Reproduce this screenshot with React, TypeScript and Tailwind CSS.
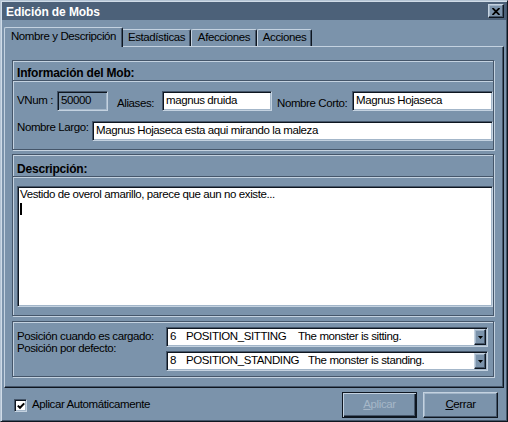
import React from "react";

const raised =
  "border border-t-[#c4d2e0] border-l-[#c4d2e0] border-r-[#0e1620] border-b-[#0e1620] shadow-[inset_-1px_-1px_0_#45566a,inset_1px_1px_0_#a3b6c9]";
const sunken =
  "border border-t-[#45566a] border-l-[#45566a] border-r-[#c4d2e0] border-b-[#c4d2e0] shadow-[inset_1px_1px_0_#0e1620,inset_-1px_-1px_0_#a3b6c9]";
const etched = "border border-[#45566a] shadow-[inset_1px_1px_0_#c4d2e0,1px_1px_0_#c4d2e0]";

function DropArrow() {
  return (
    <div className={`w-[12px] h-[16px] mr-[1px] bg-[#7b93ab] ${raised} flex items-center justify-center shrink-0`}>
      <svg width="5" height="3" viewBox="0 0 5 3">
        <polygon points="0,0 5,0 2.5,3" fill="#000" />
      </svg>
    </div>
  );
}

function Select({ num, code, codeW, desc }: { num: string; code: string; codeW: string; desc: string }) {
  return (
    <div className={`w-[322px] h-[20px] bg-white ${sunken} flex items-center`}>
      <div className="flex-1 flex items-center pl-[3px] whitespace-pre overflow-hidden">
        <span className="w-[16px] shrink-0">{num}</span>
        <span className={`${codeW} shrink-0`}>{code}</span>
        <span>{desc}</span>
      </div>
      <DropArrow />
    </div>
  );
}

export default function App() {
  return (
    <div className="w-[508px] h-[422px] bg-[#7b93ab] font-['Liberation_Sans',Arial,sans-serif] text-[11.5px] tracking-[-0.4px] text-black leading-none select-none overflow-hidden">
      <div className="w-full h-full flex flex-col border border-t-[#b4c4d4] border-l-[#b4c4d4] border-r-[#0e1620] border-b-[#0e1620] shadow-[inset_1px_1px_0_#d0dce8,inset_-1px_-1px_0_#45566a] p-px">
        {/* Title bar */}
        <div className="h-[18px] shrink-0 bg-[#4c6179] flex items-start justify-between pl-[4px] pr-[2px]">
          <span className="mt-[4px] text-white font-bold text-[12px] tracking-[-0.1px]">Edición de Mobs</span>
          <div className={`mt-[2px] w-[16px] h-[14px] bg-[#7b93ab] ${raised} flex items-center justify-center`}>
            <svg width="8" height="7" viewBox="0 0 8 7">
              <path d="M0.5 0 L7.5 7 M7.5 0 L0.5 7" stroke="#000" strokeWidth="1.8" />
            </svg>
          </div>
        </div>

        {/* Tabs */}
        <div className="mt-[7px] ml-[2px] h-[20px] -mb-px flex items-end relative z-10 shrink-0">
          <div className="w-[119px] h-[20px] bg-[#7b93ab] border-t border-l border-r border-t-[#c4d2e0] border-l-[#c4d2e0] border-r-[#0e1620] shadow-[inset_-1px_0_0_#45566a] rounded-t-[2px] flex justify-center pt-[3px]">
            Nombre y Descripción
          </div>
          <div className="w-[68px] h-[17px] mb-px bg-[#7b93ab] border-t border-r border-t-[#c4d2e0] border-r-[#0e1620] shadow-[inset_-1px_0_0_#45566a] rounded-tr-[2px] flex justify-center pt-[2px]">
            Estadísticas
          </div>
          <div className="w-[66px] h-[17px] mb-px bg-[#7b93ab] border-t border-l border-r border-t-[#c4d2e0] border-l-[#c4d2e0] border-r-[#0e1620] shadow-[inset_-1px_0_0_#45566a] rounded-t-[2px] flex justify-center pt-[2px]">
            Afecciones
          </div>
          <div className="w-[55px] h-[17px] mb-px bg-[#7b93ab] border-t border-l border-r border-t-[#c4d2e0] border-l-[#c4d2e0] border-r-[#0e1620] shadow-[inset_-1px_0_0_#45566a] rounded-t-[2px] flex justify-center pt-[2px]">
            Acciones
          </div>
        </div>

        {/* Tab panel */}
        <div className="ml-[2px] w-[500px] h-[342px] shrink-0 border border-t-[#c4d2e0] border-l-[#c4d2e0] border-r-[#0e1620] border-b-[#0e1620] shadow-[inset_-1px_-1px_0_#45566a] pt-[13px] pl-[7px] flex flex-col">
          {/* Información del Mob */}
          <div className={`w-[482px] h-[90px] shrink-0 ${etched} flex flex-col`}>
            <div className="h-[20px] border-b border-[#45566a] shadow-[0_1px_0_#c4d2e0] pl-[4px] pt-[6px] font-bold text-[12px] tracking-[-0.2px]">
              Información del Mob:
            </div>
            <div className="mt-[10px] h-[20px] pl-[4px] flex items-start">
              <span className="w-[40px] mt-[4px] shrink-0">VNum :</span>
              <div className={`w-[51px] h-[20px] bg-[#7b93ab] ${sunken} flex items-center pl-[3px]`}>50000</div>
              <span className="ml-[9px] w-[45px] mt-[7px] shrink-0">Aliases:</span>
              <div className={`w-[110px] h-[20px] bg-white ${sunken} flex items-center pl-[3px]`}>magnus druida</div>
              <span className="ml-[5px] w-[75px] mt-[7px] shrink-0">Nombre Corto:</span>
              <div className={`flex-1 h-[20px] bg-white ${sunken} flex items-center pl-[3px]`}>Magnus Hojaseca</div>
            </div>
            <div className="mt-[10px] h-[20px] pl-[4px] flex items-start">
              <span className="w-[75px] mt-[1px] shrink-0">Nombre Largo:</span>
              <div className={`flex-1 h-[20px] bg-white ${sunken} flex items-center pl-[3px]`}>
                Magnus Hojaseca esta aqui mirando la maleza
              </div>
            </div>
          </div>

          {/* Descripción */}
          <div className={`mt-[4px] w-[482px] h-[162px] shrink-0 ${etched} flex flex-col`}>
            <div className="h-[22px] border-b border-[#45566a] shadow-[0_1px_0_#c4d2e0] pl-[4px] pt-[8px] font-bold text-[12px] tracking-[-0.2px]">
              Descripción:
            </div>
            <div className="mt-[9px] pl-[4px] flex">
              <div className={`flex-1 h-[121px] bg-white ${sunken} pl-[2px] pt-[2px] flex flex-col`}>
                <span>Vestido de overol amarillo, parece que aun no existe...</span>
                <div className="w-[2px] h-[12px] bg-black mt-[2px]" />
              </div>
            </div>
          </div>

          {/* Posiciones */}
          <div className={`mt-[5px] w-[482px] h-[56px] shrink-0 ${etched} flex flex-col pt-[5px] pl-[4px]`}>
            <div className="h-[20px] flex items-start">
              <span className="w-[149px] mt-[4px] shrink-0">Posición cuando es cargado:</span>
              <Select num="6" code="POSITION_SITTING" codeW="w-[112px]" desc="The monster is sitting." />
            </div>
            <div className="mt-[4px] h-[20px] flex items-start">
              <span className="w-[149px] -mt-[8px] shrink-0">Posición por defecto:</span>
              <Select num="8" code="POSITION_STANDING" codeW="w-[122px]" desc="The monster is standing." />
            </div>
          </div>
        </div>

        {/* Bottom bar */}
        <div className="flex-1 flex items-start">
          <div className="mt-[11px] ml-[12px] flex items-start">
            <div className={`w-[13px] h-[13px] bg-white ${sunken} flex items-center justify-center`}>
              <svg width="8" height="8" viewBox="0 0 8 8">
                <path d="M0.8 3.6 L3 5.8 L7.2 1.4" stroke="#000" strokeWidth="2" fill="none" />
              </svg>
            </div>
            <span className="ml-[5px]">Aplicar Automáticamente</span>
          </div>
          <div className="ml-auto mt-[4px] mr-[8px] flex gap-[6px]">
            <div className="w-[75px] h-[26px] bg-[#7b93ab] border border-[#0e1620] shadow-[inset_1px_1px_0_#c4d2e0,inset_-1px_-1px_0_#0e1620,inset_-2px_-2px_0_#45566a] flex items-center justify-center text-[#a6b7c8]">
              <span>
                <u>A</u>plicar
              </span>
            </div>
            <div className={`w-[75px] h-[26px] bg-[#7b93ab] ${raised} flex items-center justify-center`}>
              <span>
                <u>C</u>errar
              </span>
            </div>
          </div>
        </div>
      </div>
    </div>
  );
}
